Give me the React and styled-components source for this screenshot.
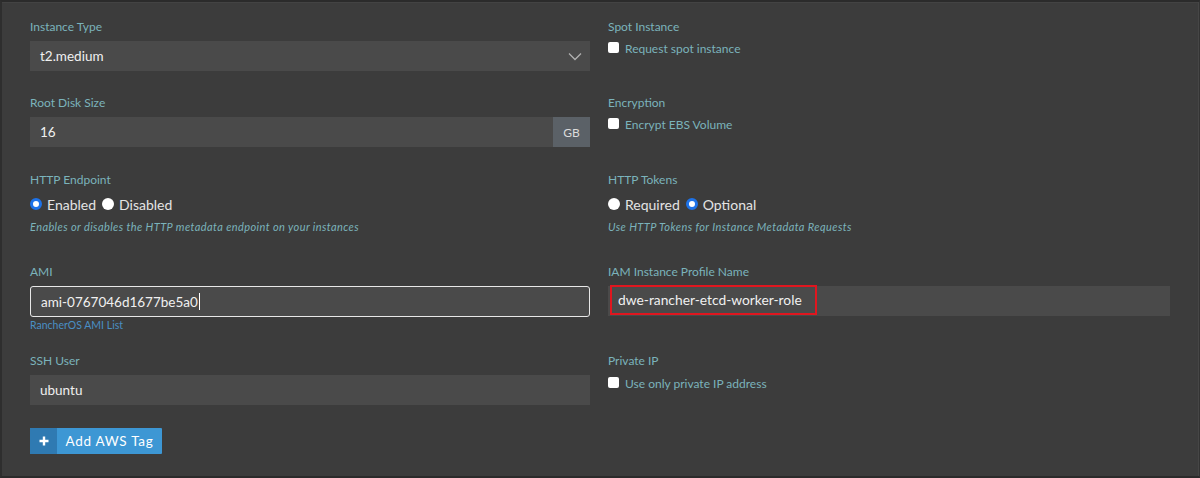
import React from "react";
import styled, { createGlobalStyle } from "styled-components";

const Global = createGlobalStyle`
  html, body { margin: 0; padding: 0; background: #3c3c3c; }
  body { font-family: "Lato", "Open Sans", sans-serif; }
  * { box-sizing: border-box; }
`;

const Frame = styled.div`
  width: 1200px;
  height: 478px;
  background: #3c3c3c;
  border-top: 2px solid #2b2b2b;
  border-left: 2px solid #2e2e2e;
  border-bottom: 2px solid #2b2b2b;
  border-right: 1px solid #333;
  box-shadow: inset -7px 0 0 -6px #464646, inset 0 3px 0 -2px #434343;
  padding: 18px 0 0 28px;
`;

const Grid = styled.div`
  display: grid;
  grid-template-columns: 560px 562px;
  column-gap: 18px;
`;

const Field = styled.div`
  display: flex;
  flex-direction: column;
  margin-bottom: ${(p) => p.$mb || 0}px;
`;

const Label = styled.div`
  font-size: 12px;
  line-height: 14px;
  height: 14px;
  color: #7bb3bb;
  margin-bottom: ${(p) => p.$mb ?? 7}px;
`;

const Box = styled.div`
  flex: ${(p) => (p.$grow ? 1 : "none")};
  background: #4a4a4a;
  display: flex;
  align-items: center;
  padding: 0 10px;
  font-size: 13.5px;
  color: #f0f0f0;
  border-radius: ${(p) => (p.$focus ? "3px" : "0")};
  border: ${(p) => (p.$focus ? "1px solid #e8e8e8" : "none")};
  height: ${(p) => (p.$focus ? "31px" : "30px")};
`;

const Select = styled(Box)`
  justify-content: space-between;
  padding-right: 8px;
`;

const Group = styled.div`
  display: flex;
  height: 30px;
`;

const Addon = styled.div`
  width: 37px;
  background: #5b6167;
  color: #dcdcdc;
  font-size: 12px;
  display: flex;
  align-items: center;
  justify-content: center;
`;

const Caret = styled.span`
  display: inline-block;
  width: 1px;
  height: 17px;
  background: #fff;
  margin-left: 1px;
`;

const Highlight = styled.span`
  border: 2px solid #e0161f;
  padding: 4px 13px 5px 6px;
  margin-left: -8px;
  margin-top: -2px;
  color: #f0f0f0;
  font-size: 13.8px;
`;

const CheckRow = styled.label`
  display: flex;
  align-items: center;
  gap: 6px;
  font-size: 12px;
  color: #7bb3bb;
  margin-top: ${(p) => p.$mt ?? 1}px;
`;

const CheckBox = styled.span`
  width: 11px;
  height: 11px;
  background: #fff;
  border-radius: 2px;
  margin-top: -3px;
`;

const RadioRow = styled.div`
  display: flex;
  align-items: center;
  gap: 6px;
  height: 18px;
  margin-top: 1px;
`;

const RadioOpt = styled.label`
  display: flex;
  align-items: center;
  gap: 5px;
  font-size: 14px;
  color: #e4e4e4;
`;

const RadioDot = styled.span`
  width: 12px;
  height: 12px;
  border-radius: 50%;
  background: #fff;
  border: ${(p) => (p.$on ? "3px solid #1d72e8" : "none")};
  box-shadow: ${(p) => (p.$on ? "inset 0 0 0 1.5px #fff" : "none")};
`;

const Help = styled.div`
  font-size: 11px;
  letter-spacing: 0.4px;
  font-style: italic;
  color: #7bb3bb;
  margin-top: 7px;
`;

const LinkHelp = styled.div`
  font-size: 10.5px;
  color: #4a8fc4;
  margin-top: 2px;
`;

const Button = styled.button`
  display: flex;
  align-items: stretch;
  height: 26px;
  width: 132px;
  padding: 0;
  border: none;
  background: #3d97d4;
  color: #fff;
  font-family: inherit;
  font-size: 13.5px;
  letter-spacing: 0.7px;
  cursor: pointer;
  border-radius: 1px;
`;

const ButtonIcon = styled.span`
  width: 27px;
  background: #2f7ab2;
  display: flex;
  align-items: center;
  justify-content: center;
`;

const ButtonText = styled.span`
  flex: 1;
  display: flex;
  align-items: center;
  justify-content: center;
`;

const Chevron = () => (
  <svg width="14" height="9" viewBox="0 0 14 9">
    <path d="M1 1.5 L7 7.5 L13 1.5" fill="none" stroke="#b0b0b0" strokeWidth="1.3" />
  </svg>
);

const Plus = () => (
  <svg width="10" height="10" viewBox="0 0 10 10">
    <path d="M5 0.5 V9.5 M0.5 5 H9.5" stroke="#fff" strokeWidth="2.4" />
  </svg>
);

export default function App() {
  return (
    <>
      <Global />
      <Frame>
        <Grid>
          <Field $mb={25}>
            <Label>Instance Type</Label>
            <Select>
              <span>t2.medium</span>
              <Chevron />
            </Select>
          </Field>
          <Field $mb={25}>
            <Label $mb={6}>Spot Instance</Label>
            <CheckRow>
              <CheckBox />
              Request spot instance
            </CheckRow>
          </Field>

          <Field $mb={26}>
            <Label>Root Disk Size</Label>
            <Group>
              <Box $grow>16</Box>
              <Addon>GB</Addon>
            </Group>
          </Field>
          <Field $mb={26}>
            <Label $mb={6}>Encryption</Label>
            <CheckRow>
              <CheckBox />
              Encrypt EBS Volume
            </CheckRow>
          </Field>

          <Field $mb={32}>
            <Label $mb={7}>HTTP Endpoint</Label>
            <RadioRow>
              <RadioOpt>
                <RadioDot $on />
                Enabled
              </RadioOpt>
              <RadioOpt>
                <RadioDot />
                Disabled
              </RadioOpt>
            </RadioRow>
            <Help>Enables or disables the HTTP metadata endpoint on your instances</Help>
          </Field>
          <Field $mb={32}>
            <Label $mb={7}>HTTP Tokens</Label>
            <RadioRow>
              <RadioOpt>
                <RadioDot />
                Required
              </RadioOpt>
              <RadioOpt>
                <RadioDot $on />
                Optional
              </RadioOpt>
            </RadioRow>
            <Help>Use HTTP Tokens for Instance Metadata Requests</Help>
          </Field>

          <Field $mb={23}>
            <Label $mb={7}>AMI</Label>
            <Box $focus>
              ami-0767046d1677be5a0
              <Caret />
            </Box>
            <LinkHelp>RancherOS AMI List</LinkHelp>
          </Field>
          <Field $mb={23}>
            <Label $mb={7}>IAM Instance Profile Name</Label>
            <Box>
              <Highlight>dwe-rancher-etcd-worker-role</Highlight>
            </Box>
          </Field>

          <Field $mb={23}>
            <Label>SSH User</Label>
            <Box>ubuntu</Box>
          </Field>
          <Field $mb={23}>
            <Label $mb={7}>Private IP</Label>
            <CheckRow>
              <CheckBox />
              Use only private IP address
            </CheckRow>
          </Field>
        </Grid>
        <Button>
          <ButtonIcon>
            <Plus />
          </ButtonIcon>
          <ButtonText>Add AWS Tag</ButtonText>
        </Button>
      </Frame>
    </>
  );
}
